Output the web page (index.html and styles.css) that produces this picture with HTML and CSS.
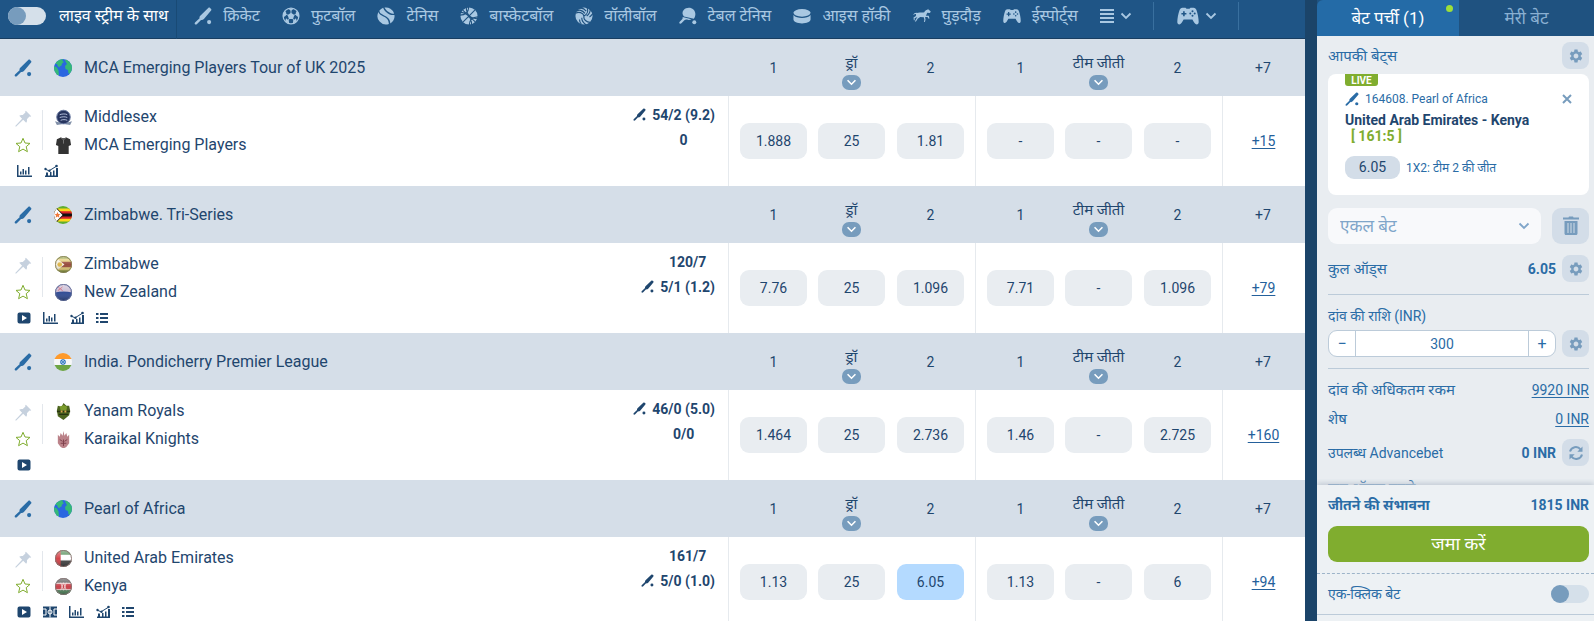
FILE: index.html
```html
<!DOCTYPE html>
<html lang="hi">
<head>
<meta charset="utf-8">
<meta name="viewport" content="width=device-width, initial-scale=1">
<title>लाइव बेट</title>
<link rel="stylesheet" href="styles.css">
</head>
<body>
<svg class="sprite" aria-hidden="true">
  <symbol id="bat" viewBox="0 0 20 20"><path d="M15.8 1.2c.6-.6 1.4-.7 2-.2l1.2 1.1c.5.6.5 1.300 0 1.900L11 13.300c-.9 1-2 1.400-3.200 1.100L3.400 18.800c-.7.7-1.600 1-2.300.4-.6-.6-.4-1.500.3-2.200l4.800-4.600c-.3-1 0-2 .8-2.800z"/><circle cx="16.800" cy="16.800" r="2.300"/></symbol>
  <symbol id="football" viewBox="0 0 20 20"><circle cx="10" cy="10" r="8.800" fill="none" stroke="currentColor" stroke-width="1.400"/><path d="M10 6.300l3.700 2.700-1.400 4.300H7.700L6.300 9zM6.500 1.800h7L10 4.300zM1.200 8l2-4 1.600 2.800-.6 3-3 2zM18.800 8l-2-4-1.600 2.800.6 3 3 2zM3.500 16l1-3.500 3 2.500.5 3.500zM16.500 16l-1-3.500-3 2.500-.5 3.500z"/><path d="M10 3v4M13.500 9l3-1.500M12 13l2 3M8 13l-2 3M6.500 9l-3-1.500" stroke="currentColor" fill="none"/></symbol>
  <symbol id="tennis" viewBox="0 0 20 20"><path d="M8.300.6A9.500 9.500 0 0 1 19 7.200c-1.200.4-2.800.2-4.300-.5C12.500 5.700 9.600 3.500 8.300.6zM6.800.9c1.200 3.400 4.200 6 7.200 7.300 1.900.8 3.800 1 5.400.6a9.500 9.500 0 0 1-4.700 9.500c.2-2.200-.8-4.400-2.400-6.100-2.600-2.500-6-3.200-8.800-5.500C2.900 6 2.700 5 2.700 4A9.500 9.500 0 0 1 6.800.9zM1.600 5.600c.6 2 2.500 3.500 5 4.700 3.200 1.400 6.500 3.500 6.600 8.600A9.500 9.500 0 0 1 1.600 5.600z"/></symbol>
  <symbol id="basketball" viewBox="0 0 20 20"><circle cx="10" cy="10" r="9.500"/><path d="M3 3.500l14 13M16.500 3.500L3.500 16.500M9.500 0c.5 5-3.500 9-9.500 9M10.500 20c-.5-5 3.500-9 9.500-9M7 0c0 9 5 13 13 13M0 6c8 0 13 6 13 14" fill="none" stroke="#1f5280" stroke-width="1.200"/></symbol>
  <symbol id="volleyball" viewBox="0 0 20 20"><circle cx="10" cy="10" r="9.500"/><path d="M10 10C9 6 4 5 .5 7M11 7C8 3 4 3 2 4.500M12.500 4.500C10 1.500 7 1 5 1.500M10 10c4-2 5-6 3-10M13 10c3-2 4-5 4-8M16 11c2-1 3-3 4-4M10 10c-1 4 3 7 7 7M7.500 12c0 3 2 6 5 8M5 14c0 2 1 4 2 5" fill="none" stroke="#1f5280" stroke-width="1.300"/></symbol>
  <symbol id="tabletennis" viewBox="0 0 20 20"><path d="M5 3.500C8 .2 13 0 16 2.700c3 3 2.700 7.300.5 10.300L5.500 10.500C3.800 8.500 3.200 5.800 5 3.500zM4 11.200l9.800 2.300c-1.700 1-3.300 1-4.800.5-1.300-.3-2.200 0-3 .8l-3.300 3.300c-.7.7-1.500.6-2 .1-.6-.6-.5-1.300.1-1.900l2.700-2.800c.6-.6.8-1.400.5-2.300z"/><circle cx="17" cy="17" r="2.200"/></symbol>
  <symbol id="puck" viewBox="0 0 20 20"><ellipse cx="10" cy="6.500" rx="9.500" ry="4.200"/><path d="M.5 9c2 2.600 5.500 3.200 9.500 3.200S17.500 11.600 19.500 9v5c0 2.600-4.300 4.200-9.500 4.200S.5 16.600.5 14z"/></symbol>
  <symbol id="horse" viewBox="0 0 20 20"><path d="M19.800 5.200L18.600 3.800 17.200 3l-.3-1-.9 1c-1.500.2-2.700 1.200-3.500 2.700-1.200.8-3.500.4-5 .4-1.400 0-2.300.4-3.100.5C2.500 6.200 1.200 7 .2 9c1-.7 1.900-1.200 3.200-1.200l-.2 2.100L.6 11.800l.3 2.900h1l-.1-2.300 3-1.200-1 1.500-1.800 3.500h1.300l1.900-3.200 2.800-2 4 .3.700 3-.6 2.200 1.100.2.700-2.400-.4-3.100 2.600-.2 1.300 2.100.9-.3-.8-3-3.200-.2c.8-1.200 1-2.400 1.500-3.300l2.800.4z"/></symbol>
  <symbol id="pad" viewBox="0 0 22 18"><path fill-rule="evenodd" d="M5.500.8h3l1 .9h3l1-.9h3c1.500 0 2.500.9 3 2.500 1.200 3.500 2.200 8.200 2.200 11.700 0 1.500-.8 2.500-2 2.500-1.600 0-2.700-2.200-4.300-5H6.600c-1.600 2.800-2.700 5-4.300 5-1.200 0-2-1-2-2.500C.3 11.500 1.300 6.800 2.500 3.300 3 1.700 4 .8 5.500.8zm.6 3.400v1.700H4.400v1.600h1.700v1.700h1.600V7.500h1.700V5.900H7.700V4.200zM15.500 3.300a1 1 0 1 0 0 2 1 1 0 0 0 0-2zM13.300 5.500a1 1 0 1 0 0 2 1 1 0 0 0 0-2zm4.400 0a1 1 0 1 0 0 2 1 1 0 0 0 0-2zM15.500 7.700a1 1 0 1 0 0 2 1 1 0 0 0 0-2z"/></symbol>
  <symbol id="lines" viewBox="0 0 14 14"><path d="M0 0h14v2H0zM0 4h14v2H0zM0 8h14v2H0zM0 12h14v2H0z"/></symbol>
  <symbol id="chev" viewBox="0 0 12 8"><path d="M1.500 1.500L6 6l4.500-4.500" fill="none" stroke="currentColor" stroke-width="1.800"/></symbol>
  <symbol id="pin" viewBox="0 0 18 18"><path d="M11.500.8l5.700 5.700-1 .6-.9-.1-2.700 2.700c.4 1.500.1 2.800-.8 3.700L8.700 10.300 1 17.700.3 17l7.200-7.800-3-3c1-.9 2.300-1.100 3.700-.8L11 2.700l-.2-1z"/></symbol>
  <symbol id="star" viewBox="0 0 16 16"><path d="M8 1.300l2 4.700 5 .4-3.800 3.300 1.200 5L8 12.100l-4.400 2.600 1.200-5L1 6.400 6 6z" fill="none" stroke="currentColor" stroke-linejoin="round"/></symbol>
  <symbol id="play" viewBox="0 0 16 16"><path fill-rule="evenodd" d="M3.500 2.500h9a2 2 0 0 1 2 2v7a2 2 0 0 1-2 2h-9a2 2 0 0 1-2-2v-7a2 2 0 0 1 2-2zM6 5v6l5-3z"/></symbol>
  <symbol id="bars" viewBox="0 0 16 16"><path d="M1 2h1.500v10.500H16V14H1zM4 8.500h1.500v3H4zM6.500 6H8v5.500H6.500zM9 7.500h1.500v4H9zM12 4h1.500v7.500H12z"/></symbol>
  <symbol id="trend" viewBox="0 0 16 16"><path d="M3 12.500h13V14H3zM4 9.500h2v3H4zM8 9h1.500v3.500H8zM11 7.500h1.500v5H11zM14 5h2v9h-2z"/><path d="M3 6l4 1.800L14 3.500" fill="none" stroke="currentColor"/><circle cx="3.500" cy="6" r="1.200"/><circle cx="7.500" cy="7.700" r="1.200"/><circle cx="14.500" cy="3" r="1.300"/></symbol>
  <symbol id="list" viewBox="0 0 16 16"><path d="M2 3h2.500v2H2zM6 3h8v2H6zM2 7h2.500v2H2zM6 7h8v2H6zM2 11h2.500v2H2zM6 11h8v2H6z"/></symbol>
  <symbol id="court" viewBox="0 0 16 16"><path d="M1 2.500h14v11H1z"/><path d="M1 5h3v6H1M15 5h-3v6h3M8 2.500v11" fill="none" stroke="#fff"/><circle cx="8" cy="8" r="2" fill="none" stroke="#fff"/></symbol>
  <symbol id="gear" viewBox="0 0 24 24"><path d="M19.140 12.940c.04-.3.06-.61.06-.94 0-.32-.02-.64-.07-.94l2.030-1.580c.18-.14.23-.41.12-.61l-1.920-3.320c-.12-.22-.37-.29-.59-.22l-2.390.96c-.5-.38-1.030-.7-1.620-.94l-.36-2.540c-.04-.24-.24-.41-.48-.41h-3.840c-.24 0-.43.17-.47.41l-.36 2.540c-.59.24-1.130.57-1.620.94l-2.390-.96c-.22-.08-.47 0-.59.22L2.740 8.870c-.12.21-.08.47.12.61l2.030 1.580c-.05.3-.09.63-.09.94s.02.64.07.94l-2.030 1.580c-.18.14-.23.41-.12.61l1.920 3.320c.12.22.37.29.59.22l2.390-.96c.5.38 1.030.7 1.620.94l.36 2.540c.05.24.24.41.48.41h3.840c.24 0 .44-.17.47-.41l.36-2.540c.59-.24 1.130-.56 1.620-.94l2.390.96c.22.08.47 0 .59-.22l1.920-3.320c.12-.22.07-.47-.12-.61l-2.010-1.580zM12 15.600c-1.980 0-3.600-1.620-3.600-3.600s1.620-3.600 3.600-3.600 3.600 1.620 3.600 3.600-1.620 3.600-3.600 3.600z"/></symbol>
  <symbol id="sync" viewBox="0 0 16 16"><path d="M2 6.500a6 6 0 0 1 10.500-2.200M14 9.500A6 6 0 0 1 3.500 11.700" fill="none" stroke="currentColor" stroke-width="2"/><path d="M14.500 1.500v5.200H9.300zM1.500 14.500V9.300h5.200z"/></symbol>
  <symbol id="trash" viewBox="0 0 16 20"><path fill-rule="evenodd" d="M5.500 1.500L6 .5h4l.5 1H16v2H0v-2zM1.500 5h13v12.500c0 .9-.6 1.500-1.500 1.500H3c-.9 0-1.500-.6-1.500-1.500zM4.500 7v10h1V7zm3 0v10h1V7zm3 0v10h1V7z"/></symbol>
  <symbol id="cross" viewBox="0 0 10 10"><path d="M1 1l8 8M9 1L1 9" stroke="currentColor" stroke-width="2" fill="none"/></symbol>
  <clipPath id="disc"><circle cx="9" cy="9" r="9"/></clipPath>
  <linearGradient id="gloss" x1="0" y1="0" x2="0" y2="1"><stop offset="0" stop-color="#fff" stop-opacity=".5"/><stop offset=".5" stop-color="#fff" stop-opacity=".1"/><stop offset="1" stop-color="#222" stop-opacity=".4"/></linearGradient>
  <symbol id="globe" viewBox="0 0 18 18"><g clip-path="url(#disc)"><path d="M0 0h18v18H0z" fill="#2a66e0"/><path d="M1 5C2 2 5 0 9 0l-.5 2 1.500 1-2 1.500-.5 2-2 1 .5 1-2-1-1-2.500zM11 1l3-1 4 4v8l-1.500 3-2-.5-.5-3.500-2.500-1-.5-3 2-2-1-1.500z" fill="#35b878"/><path d="M0 7l3 1.500 1.500 3L5 16l-2 1-3-4z" fill="#35b878"/></g></symbol>
  <symbol id="zw" viewBox="0 0 18 18"><g clip-path="url(#disc)"><path d="M0 0h18v18H0z" fill="#5fae2e"/><path d="M0 2.600h18v12.800H0z" fill="#fdd61a"/><path d="M0 5.200h18v7.600H0z" fill="#d9222c"/><path d="M0 7.600h18v2.800H0z" fill="#111"/><path d="M0-1l9.500 10L0 19z" fill="#111"/><path d="M0 0l8.500 9L0 18z" fill="#fff"/><path d="M3.500 6l.9 2 2.100.2-1.600 1.300.5 2.200-1.900-1.100-1.900 1.100.5-2.200L.5 8.200l2.100-.2z" fill="#ef7a3c"/></g></symbol>
  <symbol id="in" viewBox="0 0 18 18"><g clip-path="url(#disc)"><path d="M0 0h18v6H0z" fill="#ff9a2b"/><path d="M0 6h18v6H0z" fill="#f6f7f8"/><path d="M0 12h18v6H0z" fill="#6da544"/><circle cx="9" cy="9" r="2.200" fill="#fff" stroke="#1767b8" stroke-width="1.100"/><circle cx="9" cy="9" r="1" fill="#1767b8"/></g></symbol>
  <symbol id="t-zim" viewBox="0 0 18 18"><g clip-path="url(#disc)"><path d="M0 0h18v18H0z" fill="#8d9c35"/><path d="M0 3h18v12H0z" fill="#e2c86a"/><path d="M0 6h18v6H0z" fill="#8e3a2a"/><path d="M0 1l10 8L0 17z" fill="#f4efdc"/><circle cx="5" cy="9" r="2.500" fill="#dcae39"/><path d="M0 0h18v18H0z" fill="url(#gloss)"/></g><circle cx="9" cy="9" r="8.500" fill="none" stroke="#88835a"/></symbol>
  <symbol id="t-nz" viewBox="0 0 18 18"><g clip-path="url(#disc)"><path d="M0 0h18v18H0z" fill="#1d3b8b"/><path d="M0 0h18v9Q9 7 0 9z" fill="#c3b4cf"/><path d="M3 3l5 4M8 3L3 7" stroke="#c6495b"/><path d="M0 0h18v18H0z" fill="url(#gloss)"/></g><circle cx="9" cy="9" r="8.500" fill="none" stroke="#606b95"/></symbol>
  <symbol id="t-uae" viewBox="0 0 18 18"><g clip-path="url(#disc)"><path d="M0 0h18v6H0z" fill="#438247"/><path d="M0 5h18v6H0z" fill="#fff"/><path d="M0 11h18v7H0z" fill="#333"/><path d="M0 0h6v18H0z" fill="#d03238"/><path d="M0 0h18v18H0z" fill="url(#gloss)"/></g><circle cx="9" cy="9" r="8.500" fill="none" stroke="#8a7370"/></symbol>
  <symbol id="t-ken" viewBox="0 0 18 18"><g clip-path="url(#disc)"><path d="M0 0h18v18H0z" fill="#444"/><path d="M0 5h18v8H0z" fill="#f3e8e8"/><path d="M0 6h18v6H0z" fill="#c5303a"/><path d="M0 13h18v5H0z" fill="#448052"/><path d="M6 5l3 8 3-8M6 13l3-8 3 8" stroke="#f5dede" stroke-width=".8" fill="none"/><path d="M0 0h18v18H0z" fill="url(#gloss)"/></g><circle cx="9" cy="9" r="8.500" fill="none" stroke="#877"/></symbol>
  <symbol id="t-mid" viewBox="0 0 18 18"><path d="M0 13l4 1h10l4-1-2 4-7-1-7 1z" fill="#8190a8"/><circle cx="9" cy="8.500" r="7.200" fill="#26345e" stroke="#6c7ca3"/><path d="M5 6c3-1 6-1 8 0M5 9c3-1 6-1 8 0M6 12c2-1 5-1 7 0" stroke="#b9c3df" fill="none"/></symbol>
  <symbol id="t-shirt" viewBox="0 0 18 18"><path d="M6 .5Q9 2 12 .5l4 2 1 6-2.500 1V18h-11V9.500L1 8.500l1-6z" fill="#333"/><path d="M6 .5L9 3l3-2.500M9 3v4" stroke="#777" fill="none"/></symbol>
  <symbol id="t-yan" viewBox="0 0 18 18"><path d="M9 0l3 3h3l1 5-1 5-6 5-6-4-1-6 1-5 4 1z" fill="#4c641f"/><path d="M5 4l4-2 4 2-1 4H6z" fill="#7a9b2b"/><path d="M2 9h14M4 12h10" stroke="#27340f" stroke-width="1.500"/><path d="M6 8h2v2H6zM10 8h2v2h-2z" fill="#d9a84d"/></symbol>
  <symbol id="t-kar" viewBox="0 0 18 18"><path d="M3 4l2 2 1-4 2 3 1-5 1 5 2-3 1 4 2-2v9l-3 4-3 1.500L6 17l-3-4z" fill="#bb8289"/><path d="M5 9l3 2M13 9l-3 2M6 13h6M9 9v7" stroke="#7d3f4a" fill="none"/></symbol>
</svg>

<div class="app">
  <main class="board">
    <header class="topbar">
      <label class="stream"><input class="switch" type="checkbox" role="switch">लाइव स्ट्रीम के साथ</label>
      <nav class="sports">
        <a href="#"><svg><use href="#bat"/></svg>क्रिकेट</a>
        <a href="#"><svg><use href="#football"/></svg>फुटबॉल</a>
        <a href="#"><svg><use href="#tennis"/></svg>टेनिस</a>
        <a href="#"><svg><use href="#basketball"/></svg>बास्केटबॉल</a>
        <a href="#"><svg><use href="#volleyball"/></svg>वॉलीबॉल</a>
        <a href="#"><svg><use href="#tabletennis"/></svg>टेबल टेनिस</a>
        <a href="#"><svg><use href="#puck"/></svg>आइस हॉकी</a>
        <a href="#"><svg><use href="#horse"/></svg>घुड़दौड़</a>
        <a href="#"><svg><use href="#pad"/></svg>ईस्पोर्ट्स</a>
      </nav>
      <button class="more" aria-label="सभी खेल"><svg class="i-lines"><use href="#lines"/></svg><svg class="i-chev"><use href="#chev"/></svg></button>
      <button class="more boxed" aria-label="गेम"><svg class="i-pad"><use href="#pad"/></svg><svg class="i-chev"><use href="#chev"/></svg></button>
    </header>

    <table class="odds">
      <colgroup><col><col class="c-first"><col class="c-mid"><col class="c-last"><col class="c-first"><col class="c-mid"><col class="c-last"><col class="c-more"></colgroup>
      <tbody>
        <tr class="league">
          <th><div class="title"><svg class="sport"><use href="#bat"/></svg><svg><use href="#globe"/></svg>MCA Emerging Players Tour of UK 2025</div></th>
          <th class="first">1</th><th><button class="pick">ड्रॉ<svg><use href="#chev"/></svg></button></th><th class="last">2</th>
          <th class="first">1</th><th><button class="pick">टीम जीती<svg><use href="#chev"/></svg></button></th><th class="last">2</th><th>+7</th>
        </tr>
        <tr class="match">
          <td><div class="event">
            <div class="marks"><button aria-label="पिन"><svg class="pin"><use href="#pin"/></svg></button><button aria-label="पसंदीदा"><svg class="star"><use href="#star"/></svg></button></div>
            <div class="teams"><a href="#"><svg><use href="#t-mid"/></svg>Middlesex</a><a href="#"><svg><use href="#t-shirt"/></svg>MCA Emerging Players</a></div>
            <div class="scores"><svg class="up"><use href="#bat"/></svg><b>54/2 (9.2)</b><b>0</b></div>
            <div class="tools"><svg><use href="#bars"/></svg><svg><use href="#trend"/></svg></div>
          </div></td>
          <td class="first"><button>1.888</button></td><td><button>25</button></td><td class="last"><button>1.81</button></td>
          <td class="first"><button>-</button></td><td><button>-</button></td><td class="last"><button>-</button></td><td class="count"><a href="#">+15</a></td>
        </tr>
      </tbody>
      <tbody>
        <tr class="league">
          <th><div class="title"><svg class="sport"><use href="#bat"/></svg><svg><use href="#zw"/></svg>Zimbabwe. Tri-Series</div></th>
          <th class="first">1</th><th><button class="pick">ड्रॉ<svg><use href="#chev"/></svg></button></th><th class="last">2</th>
          <th class="first">1</th><th><button class="pick">टीम जीती<svg><use href="#chev"/></svg></button></th><th class="last">2</th><th>+7</th>
        </tr>
        <tr class="match">
          <td><div class="event">
            <div class="marks"><button aria-label="पिन"><svg class="pin"><use href="#pin"/></svg></button><button aria-label="पसंदीदा"><svg class="star"><use href="#star"/></svg></button></div>
            <div class="teams"><a href="#"><svg><use href="#t-zim"/></svg>Zimbabwe</a><a href="#"><svg><use href="#t-nz"/></svg>New Zealand</a></div>
            <div class="scores"><svg class="down"><use href="#bat"/></svg><b>120/7</b><b>5/1 (1.2)</b></div>
            <div class="tools"><svg><use href="#play"/></svg><svg><use href="#bars"/></svg><svg><use href="#trend"/></svg><svg><use href="#list"/></svg></div>
          </div></td>
          <td class="first"><button>7.76</button></td><td><button>25</button></td><td class="last"><button>1.096</button></td>
          <td class="first"><button>7.71</button></td><td><button>-</button></td><td class="last"><button>1.096</button></td><td class="count"><a href="#">+79</a></td>
        </tr>
      </tbody>
      <tbody>
        <tr class="league">
          <th><div class="title"><svg class="sport"><use href="#bat"/></svg><svg><use href="#in"/></svg>India. Pondicherry Premier League</div></th>
          <th class="first">1</th><th><button class="pick">ड्रॉ<svg><use href="#chev"/></svg></button></th><th class="last">2</th>
          <th class="first">1</th><th><button class="pick">टीम जीती<svg><use href="#chev"/></svg></button></th><th class="last">2</th><th>+7</th>
        </tr>
        <tr class="match">
          <td><div class="event">
            <div class="marks"><button aria-label="पिन"><svg class="pin"><use href="#pin"/></svg></button><button aria-label="पसंदीदा"><svg class="star"><use href="#star"/></svg></button></div>
            <div class="teams"><a href="#"><svg><use href="#t-yan"/></svg>Yanam Royals</a><a href="#"><svg><use href="#t-kar"/></svg>Karaikal Knights</a></div>
            <div class="scores"><svg class="up"><use href="#bat"/></svg><b>46/0 (5.0)</b><b>0/0</b></div>
            <div class="tools"><svg><use href="#play"/></svg></div>
          </div></td>
          <td class="first"><button>1.464</button></td><td><button>25</button></td><td class="last"><button>2.736</button></td>
          <td class="first"><button>1.46</button></td><td><button>-</button></td><td class="last"><button>2.725</button></td><td class="count"><a href="#">+160</a></td>
        </tr>
      </tbody>
      <tbody>
        <tr class="league">
          <th><div class="title"><svg class="sport"><use href="#bat"/></svg><svg><use href="#globe"/></svg>Pearl of Africa</div></th>
          <th class="first">1</th><th><button class="pick">ड्रॉ<svg><use href="#chev"/></svg></button></th><th class="last">2</th>
          <th class="first">1</th><th><button class="pick">टीम जीती<svg><use href="#chev"/></svg></button></th><th class="last">2</th><th>+7</th>
        </tr>
        <tr class="match">
          <td><div class="event">
            <div class="marks"><button aria-label="पिन"><svg class="pin"><use href="#pin"/></svg></button><button aria-label="पसंदीदा"><svg class="star"><use href="#star"/></svg></button></div>
            <div class="teams"><a href="#"><svg><use href="#t-uae"/></svg>United Arab Emirates</a><a href="#"><svg><use href="#t-ken"/></svg>Kenya</a></div>
            <div class="scores"><svg class="down"><use href="#bat"/></svg><b>161/7</b><b>5/0 (1.0)</b></div>
            <div class="tools"><svg><use href="#play"/></svg><svg><use href="#court"/></svg><svg><use href="#bars"/></svg><svg><use href="#trend"/></svg><svg><use href="#list"/></svg></div>
          </div></td>
          <td class="first"><button>1.13</button></td><td><button>25</button></td><td class="last"><button class="chosen">6.05</button></td>
          <td class="first"><button>1.13</button></td><td><button>-</button></td><td class="last"><button>6</button></td><td class="count"><a href="#">+94</a></td>
        </tr>
      </tbody>
    </table>
  </main>

  <aside class="slip">
    <div class="tabs"><button class="active">बेट पर्ची (1)<i class="dot"></i></button><button>मेरी बेट</button></div>
    <div class="scroll">
      <div class="row head"><span>आपकी बेट्स</span><button class="square" aria-label="सेटिंग"><svg><use href="#gear"/></svg></button></div>
      <article class="bet">
        <span class="live">LIVE</span>
        <div class="bet-league"><svg><use href="#bat"/></svg><span>164608. Pearl of Africa</span><button aria-label="हटाएं"><svg><use href="#cross"/></svg></button></div>
        <div class="bet-name">United Arab Emirates - Kenya</div>
        <div class="bet-score">[ 161:5 ]</div>
        <div class="bet-pick"><span class="pill">6.05</span>1X2: टीम 2 की जीत</div>
      </article>
      <div class="kind">
        <div class="combo"><select aria-label="बेट का प्रकार"><option>एकल बेट</option></select><svg><use href="#chev"/></svg></div>
        <button class="trash" aria-label="सभी हटाएं"><svg><use href="#trash"/></svg></button>
      </div>
      <div class="row total"><span>कुल ऑड्स</span><b>6.05</b><button class="square" aria-label="सेटिंग"><svg><use href="#gear"/></svg></button></div>
      <div class="stake">
        <label for="stake">दांव की राशि (INR)</label>
        <div class="row">
          <div class="stepper"><button aria-label="घटाएं">−</button><input id="stake" type="text" value="300"><button aria-label="बढ़ाएं">+</button></div>
          <button class="square" aria-label="सेटिंग"><svg><use href="#gear"/></svg></button>
        </div>
      </div>
      <div class="row line max"><span>दांव की अधिकतम रकम</span><a href="#">9920 INR</a></div>
      <div class="row line"><span>शेष</span><a href="#">0 INR</a></div>
      <div class="row advance"><span>उपलब्ध Advancebet</span><b>0 INR</b><button class="square" aria-label="रीफ़्रेश"><svg><use href="#sync"/></svg></button></div>
      <div class="row line"><span>जब ऑड्स बदले</span></div>
    </div>
    <footer class="pay">
      <div class="row win"><b>जीतने की संभावना</b><b>1815 INR</b></div>
      <button class="submit">जमा करें</button>
      <label class="row oneclick"><span>एक-क्लिक बेट</span><input class="switch" type="checkbox" role="switch"></label>
    </footer>
  </aside>
</div>
</body>
</html>
```
FILE: styles.css
```css
* { box-sizing: border-box; }

body {
  margin: 0;
  background: #1b4469;
  color: #1f466e;
  font-family: Roboto, "Noto Sans", "Noto Sans Devanagari", sans-serif;
  font-size: 14px;
  line-height: 20px;
}

button, input, select { font: inherit; color: inherit; margin: 0; }
button { border: 0; padding: 0; background: none; cursor: pointer; }
a { color: inherit; text-decoration: none; }
svg { display: block; flex: none; fill: currentColor; }
.sprite { position: absolute; width: 0; height: 0; }

.app { display: flex; gap: 12px; height: 100vh; overflow: hidden; }
.board { flex: 1; min-width: 0; background: #fff; overflow: hidden; }

/* Top bar */
.topbar {
  display: flex;
  align-items: center;
  height: 39px;
  padding-bottom: 6px;
  border-bottom: 1px solid #193e61;
  background: #1f5586;
  color: #a9c8e2;
  white-space: nowrap;
  font-size: 16px;
}
.stream {
  display: flex;
  align-items: center;
  gap: 13px;
  height: 39px;
  margin-bottom: -6px;
  padding: 0 8px 6px;
  border-right: 1px solid #194a75;
  color: #fff;
}
.switch {
  appearance: none;
  display: flex;
  width: 38px;
  height: 18px;
  border-radius: 9px;
  background: #d5e0ea;
}
.switch::before { content: ""; width: 18px; height: 18px; border-radius: 9px; background: #779cbd; }
.sports { display: flex; gap: 22px; padding: 0 22px 0 17px; }
.sports a { display: flex; align-items: center; gap: 11px; }
.sports svg { width: 18px; height: 18px; }
.more { display: flex; align-items: center; gap: 6px; height: 28px; padding-right: 21px; }
.boxed { padding: 0 21px 0 23px; border: solid #39709f; border-width: 0 1px; }
.i-lines { width: 14px; height: 14px; }
.i-chev { width: 12px; height: 8px; }
.i-pad { width: 22px; height: 18px; }

/* Odds table */
.odds { width: 100%; border-collapse: separate; border-spacing: 0; table-layout: fixed; }
.c-first { width: 85px; }
.c-mid { width: 78px; }
.c-last { width: 84px; }
.c-more { width: 83px; }
.odds th, .odds td { padding: 0 6px 0 5px; text-align: center; font-weight: 400; }
.odds th:first-child, .odds td:first-child { padding: 0; }
.odds .first { padding: 0 6px 0 11px; border-left: 1px solid #e6eaee; }
.odds .last { padding: 0 11px 0 6px; }
.odds .league th { height: 57px; background: #d5dee8; border-color: #d5dee8; }
.title { display: flex; align-items: center; font-size: 16px; }
.title svg { width: 18px; height: 18px; margin-right: 12px; }
.title .sport { margin: 0 22px 0 14px; color: #2a6ca6; }
.pick { display: flex; flex-direction: column; align-items: center; gap: 2px; width: 100%; padding-top: 8px; white-space: nowrap; font-size: 15px; line-height: 20px; }
.pick svg { width: 19px; height: 15px; padding: 4px; border-radius: 7px; background: #779cbd; color: #fff; overflow: visible; }

.match td { height: 90px; }
.match td > button { width: 100%; height: 36px; border-radius: 9px; background: #e9edf1; }
.match td > .chosen { background: #b4daff; }
.odds .count { border-left: 1px solid #e6eaee; color: #24609b; }
.count a { text-decoration: underline; text-underline-offset: 2px; }

.event { display: grid; grid-template-columns: 43px 1fr auto; align-content: start; height: 90px; padding: 6px 13px 0 0; }
.marks {
  display: flex;
  flex-direction: column;
  gap: 10px;
  height: 40px;
  margin-top: 8px;
  padding-left: 15px;
  border-right: 1px solid #e3e7ec;
}
.pin { width: 17px; height: 17px; color: #c6d1de; }
.star { width: 16px; height: 16px; color: #80ad2f; }
.teams { padding: 1px 0 0 12px; text-align: left; font-size: 16px; }
.teams a { display: flex; align-items: center; gap: 12px; height: 28px; }
.teams svg { width: 17px; height: 17px; }
.scores { display: grid; grid-template: 25px 25px / auto auto; column-gap: 6px; align-items: center; align-content: start; justify-items: center; }
.scores svg { width: 13px; height: 13px; }
.scores b { grid-column: 2; }
.scores .down { grid-row: 2; }
.scores .down + b { grid-row: 1; }
.tools { grid-column: 1 / -1; display: flex; gap: 10px; padding: 4px 0 0 16px; }
.tools svg { width: 16px; height: 16px; }

/* Bet slip */
.slip { flex: none; display: flex; flex-direction: column; width: 277px; background: #e9edf1; color: #2a6ca6; }
.tabs { flex: none; display: grid; grid-template-columns: 142px 1fr; height: 36px; background: #1f5280; color: #8ab0d2; font-size: 17px; }
.tabs .active { position: relative; border-radius: 6px 0 0; background: #246ba7; color: #fff; }
.dot { position: absolute; top: 5px; right: 6px; width: 7px; height: 7px; border-radius: 4px; background: #9ddf3a; }
.scroll { flex: 1; min-height: 0; overflow: hidden; padding: 0 5px 0 11px; }
.row { display: flex; align-items: center; gap: 6px; }
.row > span:first-child, .win b:first-child { flex: 1; }
.square { display: grid; place-items: center; width: 27px; height: 27px; border-radius: 8px; background: #d3dde8; color: #779cbd; }
.square svg { width: 16px; height: 16px; }
.head { padding: 6px 0 5px; font-size: 15px; }

.bet { padding: 0 17px 16px; border-radius: 8px; background: #fff; font-size: 12px; }
.live { display: block; width: 33px; height: 12px; border-radius: 0 0 3px 3px; background: #80ad2f; color: #fff; font-size: 10px; font-weight: 700; line-height: 13px; text-align: center; }
.bet-league { display: flex; align-items: center; gap: 6px; padding-top: 3px; }
.bet-league svg { width: 14px; height: 14px; }
.bet-league span { flex: 1; }
.bet-league button { color: #779cbd; }
.bet-league button svg { width: 10px; height: 10px; }
.bet-name, .bet-score { color: #1f466e; font-size: 14px; font-weight: 700; line-height: 16px; }
.bet-name { padding-top: 3px; white-space: nowrap; }
.bet-score { padding-left: 6px; color: #80ad2f; }
.bet-pick { display: flex; align-items: center; gap: 6px; padding-top: 12px; }
.pill { width: 55px; height: 23px; border-radius: 9px; background: #d3dde8; color: #1f466e; font-size: 14px; line-height: 23px; text-align: center; }

.kind { display: flex; gap: 11px; padding: 13px 0 11px; }
.combo { flex: 1; display: grid; align-items: center; border-radius: 9px; background: #f8f9fb; color: #7fa5c9; font-size: 17px; }
.combo > * { grid-area: 1 / 1; }
.combo select { appearance: none; width: 100%; height: 36px; padding: 0 12px; border: 0; background: none; }
.combo svg { justify-self: end; width: 12px; height: 8px; margin-right: 11px; pointer-events: none; }
.trash { display: grid; place-items: center; width: 37px; height: 36px; border-radius: 9px; background: #d3dde8; color: #779cbd; }
.trash svg { width: 16px; height: 20px; }
.total span, .line span { font-size: 15px; }
.total { padding-bottom: 12px; border-bottom: 1px solid #bccbd9; }
.stake { padding: 11px 0; border-bottom: 1px solid #bccbd9; }
.stake label { display: block; padding-bottom: 4px; }
.stepper { flex: 1; display: grid; grid-template-columns: 26px 1fr 26px; height: 27px; border: 1px solid #bccbd9; border-radius: 9px; background: #fff; }
.stepper input { min-width: 0; padding: 0; border: solid #bccbd9; border-width: 0 1px; background: none; text-align: center; }
.stepper button { font-size: 16px; }
.line { height: 30px; }
.max { height: 35px; padding-top: 6px; }
.line a { text-decoration: underline; text-underline-offset: 2px; }
.advance { padding: 5px 0 7px; }

.pay { flex: none; background: #edf1f4; box-shadow: 0 -2px 5px #c3ccd5; clip-path: inset(-6px 0 0); }
.win { padding: 10px 5px 11px 11px; }
.submit { display: block; width: calc(100% - 16px); height: 36px; margin: 0 5px 11px 11px; border-radius: 9px; background: #80ad2f; color: #fff; font-size: 18px; }
.oneclick { height: 42px; margin-bottom: 6px; padding: 0 5px 0 11px; border-top: 1px dashed #9db4c9; border-bottom: 1px solid #bccbd9; }
```
